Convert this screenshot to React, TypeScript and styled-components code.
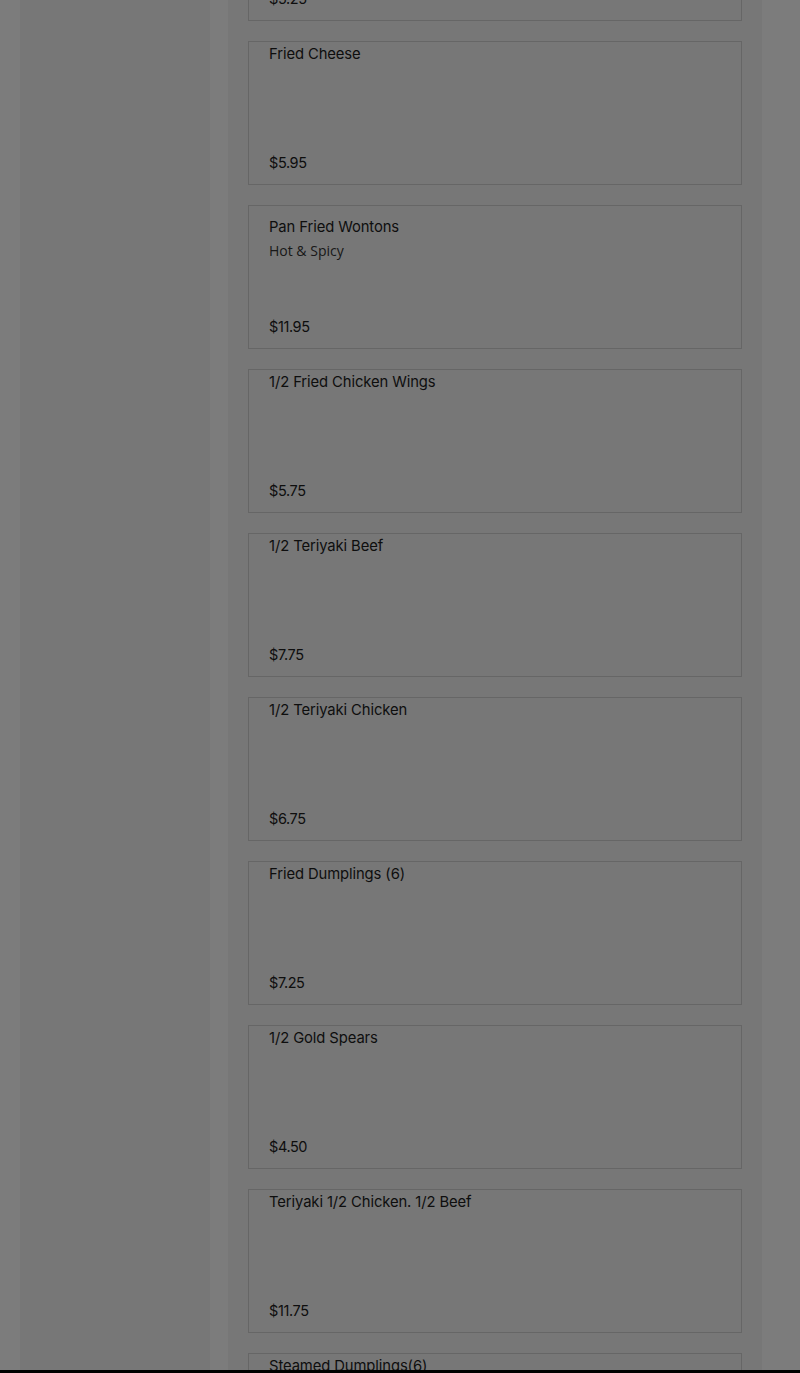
import styled, { createGlobalStyle } from "styled-components";

const GlobalStyle = createGlobalStyle`
  html, body {
    margin: 0;
    padding: 0;
    background: #f9f9f9;
    overflow: hidden;
  }
  * {
    box-sizing: border-box;
  }
`;

const Page = styled.div`
  display: flex;
  gap: 18px;
  padding: 0 38px 0 20px;
  margin-top: -123px;
  min-height: 1600px;
`;

const Sidebar = styled.aside`
  width: 190px;
  flex-shrink: 0;
  background: #eeeeee;
`;

const Main = styled.main`
  width: 534px;
  background: #eeeeee;
  padding: 0 20px;
  display: flex;
  flex-direction: column;
  gap: 20px;
`;

const Card = styled.div<{ $hasDesc?: boolean }>`
  height: 144px;
  border: 1px solid #cccccc;
  background: #eeeeee;
  padding: ${(p) => (p.$hasDesc ? "11px" : "2px")} 20px 11px;
  display: flex;
  flex-direction: column;
`;

const Name = styled.div`
  font-family: Inter, "Noto Sans", sans-serif;
  font-size: 14.8px;
  line-height: 20px;
  color: #1c1c1c;
  letter-spacing: -0.1px;
`;

const Desc = styled.div`
  font-family: "Open Sans", "Noto Sans", sans-serif;
  font-size: 14px;
  line-height: 20px;
  margin-top: 4px;
  color: #333;
`;

const Price = styled.div`
  margin-top: auto;
  font-family: Inter, "Noto Sans", sans-serif;
  font-size: 14.5px;
  line-height: 20px;
  color: #1c1c1c;
  letter-spacing: -0.4px;
`;

const Backdrop = styled.div`
  position: fixed;
  inset: 0;
  background: rgba(0, 0, 0, 0.5);
`;

const BottomBar = styled.div`
  position: fixed;
  left: 0;
  right: 0;
  bottom: 0;
  height: 3px;
  background: #000;
`;

const items = [
  { name: "Egg Rolls", price: "$5.25" },
  { name: "Fried Cheese", price: "$5.95" },
  { name: "Pan Fried Wontons", desc: "Hot & Spicy", price: "$11.95" },
  { name: "1/2 Fried Chicken Wings", price: "$5.75" },
  { name: "1/2 Teriyaki Beef", price: "$7.75" },
  { name: "1/2 Teriyaki Chicken", price: "$6.75" },
  { name: "Fried Dumplings (6)", price: "$7.25" },
  { name: "1/2 Gold Spears", price: "$4.50" },
  { name: "Teriyaki 1/2 Chicken. 1/2 Beef", price: "$11.75" },
  { name: "Steamed Dumplings(6)", price: "$7.25" },
];

export default function App() {
  return (
    <>
      <GlobalStyle />
      <Page>
        <Sidebar />
        <Main>
          {items.map((item) => (
            <Card key={item.name} $hasDesc={!!item.desc}>
              <Name>{item.name}</Name>
              {item.desc ? <Desc>{item.desc}</Desc> : null}
              <Price>{item.price}</Price>
            </Card>
          ))}
        </Main>
      </Page>
      <Backdrop />
      <BottomBar />
    </>
  );
}
